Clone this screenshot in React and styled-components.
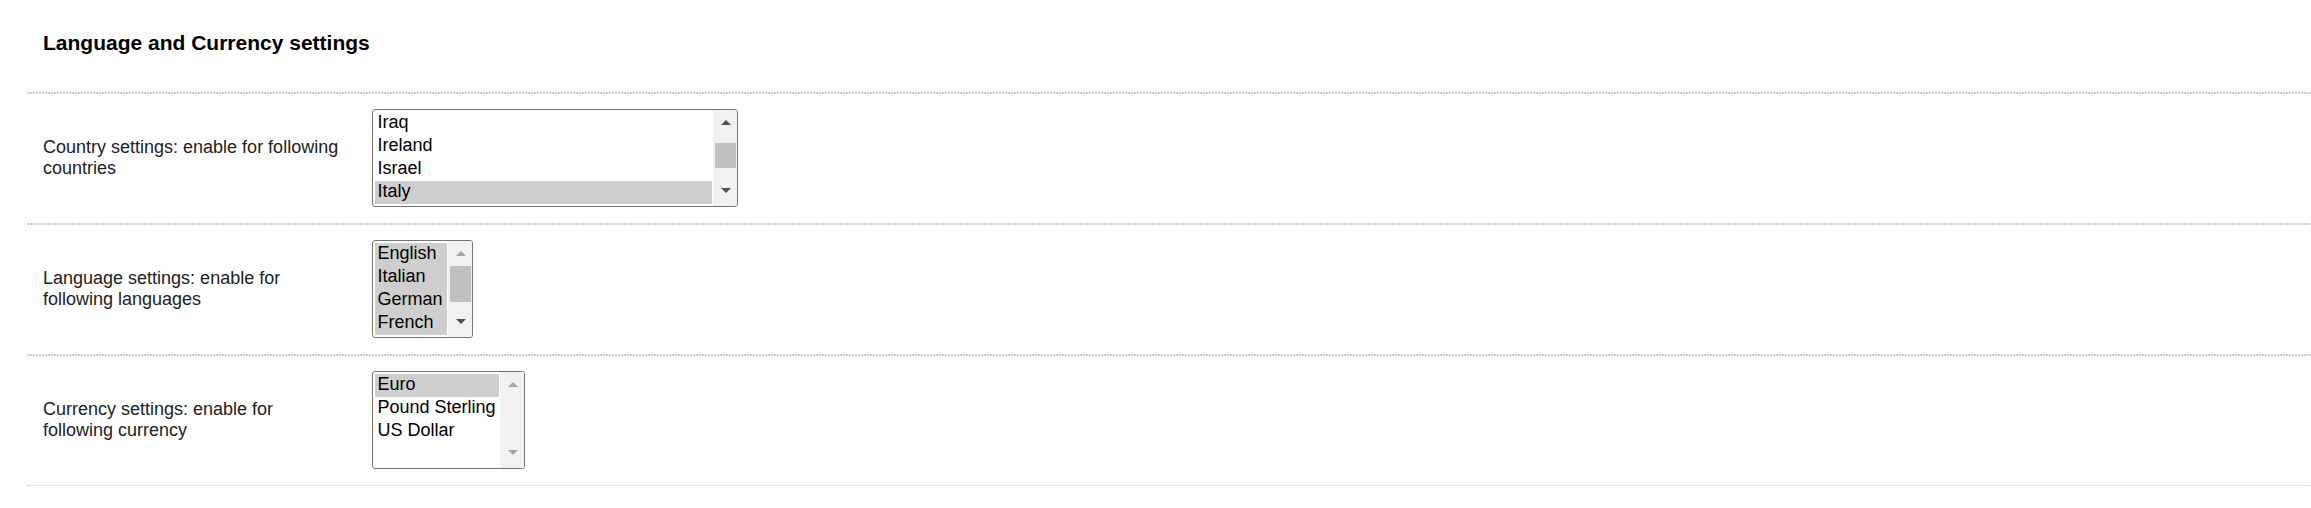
import React from 'react';
import styled, { createGlobalStyle } from 'styled-components';

const GlobalStyle = createGlobalStyle`
  body {
    margin: 0;
    background: #fff;
    font-family: "Liberation Sans", Arial, sans-serif;
    color: #222;
  }
`;

const Page = styled.div`
  padding-left: 27px;
`;

const Header = styled.div`
  padding: 31px 16px 37px;
`;

const Title = styled.h2`
  margin: 0;
  font-size: 21px;
  font-weight: 700;
  line-height: normal;
  color: #000;
`;

const SettingsTable = styled.div`
  border-bottom: 1px dotted #c6c6c6;
`;

const Row = styled.div`
  display: flex;
  align-items: center;
  padding: 17px 0 16px;
  background: repeating-linear-gradient(to right, #cbcbcb 0 2px, transparent 2px 3px) top left / 100% 2px no-repeat;
`;

const Label = styled.div`
  flex: 0 0 345px;
  box-sizing: border-box;
  padding: 0 29px 0 16px;
  font-size: 18px;
  line-height: 20.7px;
  color: #222;
`;

const ListBox = styled.div`
  display: flex;
  box-sizing: border-box;
  width: ${p => p.$width}px;
  height: 98px;
  border: 1px solid #767676;
  border-radius: 3px;
  background: #fff;
  overflow: hidden;
`;

const Options = styled.div`
  flex: 1;
  min-width: 0;
  padding: 1.5px;
`;

const Option = styled.div`
  box-sizing: border-box;
  height: 23px;
  padding: 0 3px 2px;
  font-size: 18px;
  line-height: 21px;
  color: #000;
  white-space: nowrap;
  background: ${p => (p.$selected ? '#cecece' : 'transparent')};
`;

const Scrollbar = styled.div`
  flex: 0 0 24px;
  display: flex;
  flex-direction: column;
  background: #f1f1f1;
`;

const ArrowButton = styled.div`
  flex: 0 0 25px;
  box-sizing: border-box;
  display: flex;
  justify-content: center;
  align-items: ${p => (p.$down ? 'flex-end' : 'flex-start')};
  padding: ${p => (p.$down ? '0 0 13px 2px' : '10px 0 0 2px')};
`;

const Arrow = styled.span`
  width: 0;
  height: 0;
  border-left: 5px solid transparent;
  border-right: 5px solid transparent;
  ${p => (p.$down ? 'border-top' : 'border-bottom')}: 5px solid ${p => (p.$disabled ? '#a3a3a3' : '#505050')};
`;

const Track = styled.div`
  flex: 1;
  display: flex;
  flex-direction: column;
`;

const Thumb = styled.div`
  margin: ${p => p.$top}px 1px 0 2px;
  height: ${p => p.$size}px;
  background: #c1c1c1;
`;

const SelectList = ({ width, items, selected, thumb, upDisabled, downDisabled }) => (
  <ListBox $width={width}>
    <Options>
      {items.map(item => (
        <Option key={item} $selected={selected.includes(item)}>{item}</Option>
      ))}
    </Options>
    <Scrollbar>
      <ArrowButton>
        <Arrow $disabled={upDisabled} />
      </ArrowButton>
      <Track>{thumb && <Thumb $top={thumb.top} $size={thumb.size} />}</Track>
      <ArrowButton $down>
        <Arrow $down $disabled={downDisabled} />
      </ArrowButton>
    </Scrollbar>
  </ListBox>
);

const settings = [
  {
    label: 'Country settings: enable for following countries',
    width: 366,
    items: ['Iraq', 'Ireland', 'Israel', 'Italy'],
    selected: ['Italy'],
    thumb: { top: 7.5, size: 25 },
  },
  {
    label: 'Language settings: enable for following languages',
    width: 101,
    items: ['English', 'Italian', 'German', 'French'],
    selected: ['English', 'Italian', 'German', 'French'],
    thumb: { top: 0, size: 36 },
    upDisabled: true,
  },
  {
    label: 'Currency settings: enable for following currency',
    width: 153,
    items: ['Euro', 'Pound Sterling', 'US Dollar'],
    selected: ['Euro'],
    upDisabled: true,
    downDisabled: true,
  },
];

export default function App() {
  return (
    <Page>
      <GlobalStyle />
      <Header>
        <Title>Language and Currency settings</Title>
      </Header>
      <SettingsTable>
        {settings.map(s => (
          <Row key={s.label}>
            <Label>{s.label}</Label>
            <SelectList {...s} />
          </Row>
        ))}
      </SettingsTable>
    </Page>
  );
}
